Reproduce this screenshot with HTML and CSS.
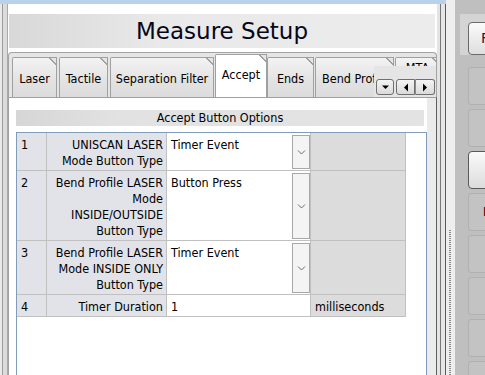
FILE: index.html
```html
<!DOCTYPE html>
<html>
<head>
<meta charset="utf-8">
<link rel="stylesheet" href="styles.css">
</head>
<body>
<div class="app">
  <div class="left">
    <div class="topstrip"></div>
    <div class="leftbody">
      <div class="edge-l"></div>
      <div class="panel">
        <div class="titlebar">Measure Setup</div>
        <div class="tabctl">
          <div class="tabstrip">
            <div class="tab t-laser">Laser</div>
            <div class="tab t-tactile">Tactile</div>
            <div class="tab t-sep">Separation Filter</div>
            <div class="tab sel t-accept">Accept</div>
            <div class="tab t-ends">Ends</div>
            <div class="tab t-bend">Bend Profile</div>
            <div class="tab t-mta">MTA</div>
            <div class="tabnav">
              <div class="navbtn nb-down"><svg width="9" height="6" viewBox="0 0 9 6"><path d="M1 1.5H8L4.5 5Z" fill="#000"/></svg></div>
              <div class="navgroup">
                <div class="navbtn nb-left"><svg width="6" height="9" viewBox="0 0 6 9"><path d="M5 0.5V8.5L1 4.5Z" fill="#000"/></svg></div>
                <div class="navbtn nb-right"><svg width="6" height="9" viewBox="0 0 6 9"><path d="M1 0.5V8.5L5 4.5Z" fill="#000"/></svg></div>
              </div>
            </div>
          </div>
          <div class="tabpage">
            <div class="section">Accept Button Options</div>
            <div class="grid">
              <div class="c num">1</div>
              <div class="c lbl">UNISCAN LASER<br>Mode Button Type</div>
              <div class="c val"><span class="vtext">Timer Event</span><span class="dd"><svg width="9" height="5" viewBox="0 0 9 5"><path d="M1 0.5L4.5 4L8 0.5" fill="none" stroke="#6a6a6a" stroke-width="1"/></svg></span></div>
              <div class="c unit"></div>

              <div class="c num">2</div>
              <div class="c lbl">Bend Profile LASER<br>Mode<br>INSIDE/OUTSIDE<br>Button Type</div>
              <div class="c val"><span class="vtext">Button Press</span><span class="dd"><svg width="9" height="5" viewBox="0 0 9 5"><path d="M1 0.5L4.5 4L8 0.5" fill="none" stroke="#6a6a6a" stroke-width="1"/></svg></span></div>
              <div class="c unit"></div>

              <div class="c num">3</div>
              <div class="c lbl">Bend Profile LASER<br>Mode INSIDE ONLY<br>Button Type</div>
              <div class="c val"><span class="vtext">Timer Event</span><span class="dd"><svg width="9" height="5" viewBox="0 0 9 5"><path d="M1 0.5L4.5 4L8 0.5" fill="none" stroke="#6a6a6a" stroke-width="1"/></svg></span></div>
              <div class="c unit"></div>

              <div class="c num">4</div>
              <div class="c lbl">Timer Duration</div>
              <div class="c val"><span class="vtext">1</span></div>
              <div class="c unit">milliseconds</div>
            </div>
          </div>
        </div>
      </div>
      <div class="edge-r"></div>
    </div>
  </div>
  <div class="splitter"><div class="dots"></div></div>
  <div class="right">
    <div class="rtop"><div class="rbtn">R</div></div>
    <div class="rlist">
      <div class="rbox"></div>
      <div class="rbox"></div>
      <div class="rbox raised"></div>
      <div class="rbox"><span class="rmark">M</span></div>
      <div class="rbox"></div>
      <div class="rbox"></div>
      <div class="rbox"></div>
      <div class="rbox"></div>
    </div>
  </div>
</div>
</body>
</html>
```
FILE: styles.css
```css
html, body {
  margin: 0;
  padding: 0;
  background: #fff;
}
body {
  font-family: "DejaVu Sans Condensed", "DejaVu Sans", sans-serif;
  font-stretch: condensed;
  font-size: 12.5px;
  color: #000;
}
.app {
  display: flex;
  width: 485px;
  height: 375px;
  overflow: hidden;
}
.left {
  width: 446px;
  display: flex;
  flex-direction: column;
  flex: none;
}
.topstrip {
  height: 4px;
  background: #b9d1ea;
  flex: none;
}
.leftbody {
  flex: 1;
  display: flex;
}
.edge-l {
  width: 8px;
  flex: none;
  background: linear-gradient(to right, #e9e9e9 0 2px, #9c9c9c 2px 3px, #dcdcdc 3px 7px, #a8a8a8 7px 8px);
}
.panel {
  width: 429px;
  flex: none;
  background: #fff;
  padding-top: 10px;
  display: flex;
  flex-direction: column;
}
.titlebar {
  margin-left: 1px;
  width: 426px;
  height: 34px;
  background: linear-gradient(to right, #d8d8d8, #e9e9e9 35%, #ececec);
  font-family: "DejaVu Sans", sans-serif;
  font-stretch: normal;
  font-size: 23px;
  line-height: 34px;
  text-align: center;
  color: #06061a;
}
.tabctl {
  margin-top: 4px;
  flex: 1;
  display: flex;
  flex-direction: column;
}
.tabstrip {
  position: relative;
  height: 45px;
  box-sizing: border-box;
  display: flex;
  align-items: flex-end;
  padding-left: 3px;
  border: 1px solid #a3a3a3;
  border-bottom: none;
  border-radius: 4px 4px 0 0;
  background: #e5e5e5;
  overflow: hidden;
  z-index: 1;
}
.tab {
  position: relative;
  flex: none;
  height: 40px;
  box-sizing: border-box;
  border: 1px solid #a0a0a0;
  border-bottom: none;
  border-radius: 2px 0 0 0;
  background: linear-gradient(to bottom, #f3f3f3, #e2e2e2 60%, #dcdcdc);
  margin-right: 2px;
  display: flex;
  align-items: center;
  justify-content: center;
  white-space: nowrap;
  overflow: hidden;
  padding-top: 1px;
}
.tab::after {
  content: "";
  position: absolute;
  top: -1px;
  right: -1px;
  width: 8px;
  height: 8px;
  background: linear-gradient(225deg, #e5e5e5 0 45%, #a0a0a0 45% 58%, transparent 58%);
}
.t-laser { width: 45px; }
.t-tactile { width: 49px; }
.t-sep { width: 104px; margin-right: 1px; }
.t-accept { width: 52px; margin-right: 0; }
.t-ends { width: 47px; margin-right: 1px; }
.t-bend { width: 79px; margin-right: 1px; justify-content: flex-start; padding-left: 6px; }
.t-mta { width: 45px; align-items: flex-start; padding-top: 2px; }
.tab.sel {
  height: 44px;
  margin-bottom: -1px;
  background: #fff;
  padding-top: 0;
  padding-bottom: 4px;
  z-index: 2;
}
.tabnav {
  position: absolute;
  left: 365px;
  right: 0;
  top: 13px;
  bottom: 0;
  background: #e5e5e5;
  display: flex;
  align-items: flex-end;
  padding: 0 1px 2px 2px;
  gap: 2px;
  z-index: 3;
}
.navbtn {
  height: 16px;
  box-sizing: border-box;
  border: 1px solid #6f6f6f;
  border-radius: 3px;
  background: linear-gradient(to bottom, #f4f4f4, #dadada);
  display: flex;
  align-items: center;
  justify-content: center;
}
.nb-down { width: 19px; }
.navgroup { display: flex; }
.nb-left { width: 19px; border-radius: 3px 0 0 3px; }
.nb-right { width: 20px; border-radius: 0 3px 3px 0; border-left: 1px solid #8a8a8a; }
.tabpage {
  flex: 1;
  border-left: 1px solid #a0a0a0;
  border-right: 1px solid #5f5f5f;
  border-top: 1px solid #a0a0a0;
  background: linear-gradient(to right, #fff 418px, #ebebeb 418px);
  padding: 12px 0 0 7px;
}
.section {
  width: 408px;
  height: 16px;
  line-height: 16px;
  text-align: center;
  background: linear-gradient(to right, #d6d6d6, #e2e2e2 25%, #e3e3e3);
}
.grid {
  margin-top: 6px;
  width: 409px;
  height: 260px;
  border: 1px solid #7f9db9;
  border-bottom: none;
  background: #fff;
  display: grid;
  grid-template-columns: 30px 120px 144px 95px;
  align-content: start;
}
.c {
  box-sizing: border-box;
  border-right: 1px solid #c0c0c0;
  border-bottom: 1px solid #c0c0c0;
  line-height: 16px;
  padding: 4px 3px 1px 4px;
  white-space: nowrap;
}
.num { background: #e1e3e8; }
.lbl { background: #e1e3e8; text-align: right; padding-right: 3px; }
.val {
  background: #fff;
  display: flex;
  padding: 0;
}
.vtext {
  flex: 1;
  padding: 4px 3px 1px 4px;
}
.dd {
  flex: none;
  width: 18px;
  margin: 2px 0 1px 0;
  box-sizing: border-box;
  border: 1px solid #a8a8a8;
  background: #f4f4f4;
  display: flex;
  align-items: center;
  justify-content: center;
}
.unit { background: #dcdcdc; }
.edge-r {
  width: 9px;
  flex: none;
  background: linear-gradient(to right, #e4e4e4 0 3px, #777 3px 4px, #e6e6e6 4px 8px, #5a5a5a 8px 9px);
}
.splitter {
  width: 9px;
  flex: none;
  background: #eeeeee;
  display: flex;
  justify-content: center;
}
.dots {
  width: 2px;
  margin-top: 230px;
  margin-left: -1px;
  background: repeating-linear-gradient(to bottom, #8a8a8a 0 1px, transparent 1px 2px);
}
.right {
  flex: 1;
  background: #bfbfbf;
  display: flex;
  flex-direction: column;
}
.rtop {
  margin: 14px 0 0 5px;
  height: 49px;
  background: #d4d4d4;
  padding: 8px 0 0 8px;
  box-sizing: border-box;
}
.rbtn {
  height: 33px;
  width: 40px;
  box-sizing: border-box;
  border: 1px solid #6a6a6a;
  border-radius: 4px;
  background: linear-gradient(to bottom, #fbfbfb, #dedede);
  font-family: "DejaVu Sans", sans-serif;
  font-stretch: normal;
  font-size: 14px;
  line-height: 31px;
  padding-left: 12px;
  color: #1a1a3a;
}
.rlist {
  margin: 12px 0 0 13px;
  display: flex;
  flex-direction: column;
  gap: 4px;
}
.rbox {
  height: 38px;
  width: 40px;
  flex: none;
  box-sizing: border-box;
  border: 1px solid #b0b0b0;
  border-radius: 3px;
  background: #c3c3c3;
  overflow: hidden;
  padding-left: 14px;
  line-height: 36px;
}
.rbox.raised {
  border: 1px solid #5a5a5a;
  border-radius: 4px;
  background: linear-gradient(to bottom, #fafafa, #dcdcdc);
}
.rmark {
  color: #6a0010;
  font-size: 13px;
  font-weight: bold;
}
```
